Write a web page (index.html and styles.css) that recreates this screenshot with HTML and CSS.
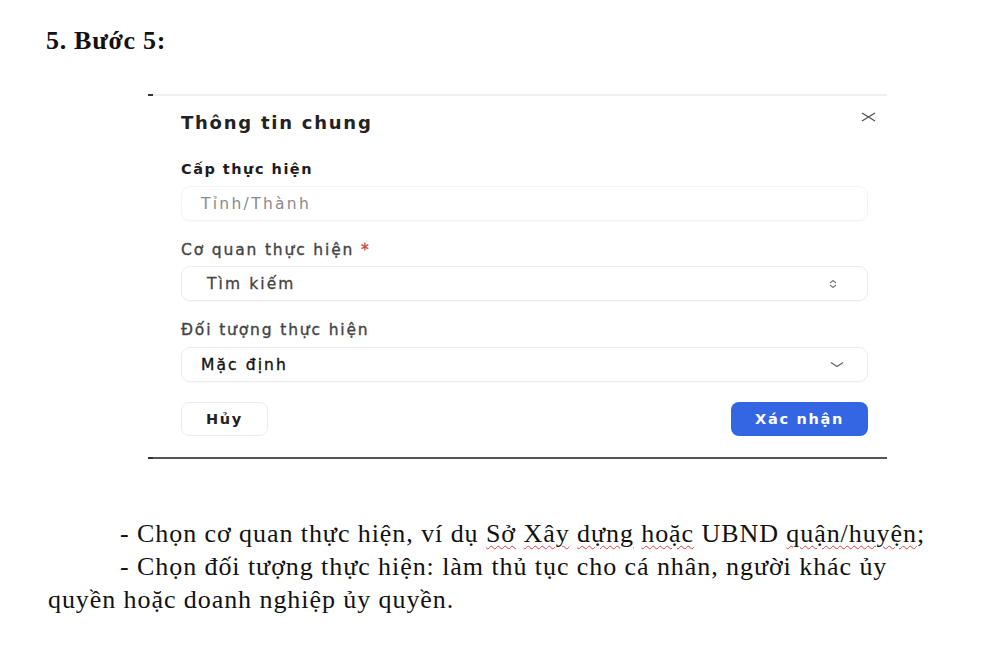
FILE: index.html
```html
<!DOCTYPE html>
<html lang="vi">
<head>
<meta charset="utf-8">
<link rel="stylesheet" href="styles.css">
</head>
<body>
<h1 class="step">5. Bước 5:</h1>
<div class="dialog">
  <div class="dlg-title">Thông tin chung</div>
  <svg class="close" width="15" height="10" viewBox="0 0 15 10"><path d="M1 1 L14 9 M14 1 L1 9" stroke="#555" stroke-width="1.4" fill="none"/></svg>
  <div class="label label-strong">Cấp thực hiện</div>
  <div class="field field-disabled"><span class="placeholder">Tỉnh/Thành</span></div>
  <div class="label">Cơ quan thực hiện <span class="req">*</span></div>
  <div class="field"><span class="search-text">Tìm kiếm</span>
    <svg class="updown" width="8" height="10" viewBox="0 0 8 10"><path d="M1 4 L4 1.5 L7 4 M1 6 L4 8.5 L7 6" stroke="#777" stroke-width="1.1" fill="none"/></svg>
  </div>
  <div class="label">Đối tượng thực hiện</div>
  <div class="field field-last"><span class="value">Mặc định</span>
    <svg class="down" width="14" height="7" viewBox="0 0 14 7"><path d="M1 1.5 L7 5.5 L13 1.5" stroke="#666" stroke-width="1.3" fill="none"/></svg>
  </div>
  <div class="actions">
    <button class="btn btn-cancel">Hủy</button>
    <button class="btn btn-ok">Xác nhận</button>
  </div>
</div>
<div class="doc">
  <p class="para">- Chọn cơ quan thực hiện, ví dụ <span class="sp">Sở</span> <span class="sp">Xây</span> <span class="sp">dựng</span> <span class="sp">hoặc</span> UBND <span class="sp">quận/huyện</span>;</p>
  <p class="para">- Chọn đối tượng thực hiện: làm thủ tục cho cá nhân, người khác ủy quyền hoặc doanh nghiệp ủy quyền.</p>
</div>
</body>
</html>
```
FILE: styles.css
```css
html, body { margin: 0; padding: 0; background: #fff; }
body { width: 1000px; height: 659px; overflow: hidden; }

.step {
  margin: 0;
  padding: 27px 0 0 46px;
  font-family: "Liberation Serif", serif;
  font-weight: bold;
  font-size: 26px;
  letter-spacing: 0.7px;
  line-height: 28px;
  color: #111;
}

.dialog {
  position: relative;
  margin: 39px 0 0 148px;
  width: 739px;
  box-sizing: border-box;
  border-top: 2px solid #efefef;
  border-bottom: 2px solid #555;
  padding: 15px 19px 21px 33px;
  font-family: "DejaVu Sans", "Liberation Sans", sans-serif;
}
.dialog::before,
.dialog::after {
  content: "";
  position: absolute;
  left: 0;
  width: 5px;
  height: 2px;
  background: #333;
}
.dialog::before { top: -2px; }
.dialog::after { bottom: -2px; }

.dlg-title {
  font-size: 18px;
  font-weight: 700;
  letter-spacing: 1.75px;
  line-height: 24px;
  color: #222;
}

.close { position: absolute; top: 16px; right: 11px; }

.label {
  margin-top: 20px;
  font-size: 15.5px;
  line-height: 18px;
  letter-spacing: 1.85px;
  color: #444;
  -webkit-text-stroke: 0.35px #444;
}
.label-strong {
  margin-top: 25px;
  font-size: 14.5px;
  font-weight: 700;
  letter-spacing: 1.5px;
  color: #1c1c1c;
  -webkit-text-stroke: 0;
}
.req { color: #d04545; -webkit-text-stroke: 0.35px #d04545; }

.field {
  margin-top: 7px;
  height: 35px;
  box-sizing: border-box;
  border: 1px solid #ececec;
  border-radius: 9px;
  display: flex;
  align-items: center;
  padding: 0 30px 0 19px;
  font-size: 15.5px;
  letter-spacing: 2.1px;
  box-shadow: 0 1px 1px rgba(0,0,0,0.03);
}
.field-disabled { margin-top: 8px; border-color: #f3f3f3; }
.field-last { margin-top: 8px; }
.placeholder { letter-spacing: 2.3px; color: #8a8a8a; }
.search-text { margin-left: 6px; color: #444; flex: 1; -webkit-text-stroke: 0.3px #444; }
.value { color: #111; flex: 1; -webkit-text-stroke: 0.35px #111; }
.down { margin-right: -7px; }

.actions {
  margin-top: 20px;
  display: flex;
  justify-content: space-between;
}
.btn {
  height: 34px;
  border-radius: 8px;
  font-family: "DejaVu Sans", "Liberation Sans", sans-serif;
  font-size: 14.5px;
  font-weight: 700;
  letter-spacing: 1.7px;
  cursor: pointer;
}
.btn-cancel {
  width: 87px;
  background: #fff;
  border: 1px solid #ececec;
  color: #222;
}
.btn-ok {
  width: 137px;
  background: #3466e3;
  border: none;
  color: #fff;
}

.doc {
  margin: 58px 0 0 48px;
  width: 880px;
  font-family: "Liberation Serif", serif;
  font-size: 26px;
  letter-spacing: 0.93px;
  line-height: 33px;
  color: #111;
}
.para { margin: 0; text-indent: 72px; }
.sp {
  text-decoration: underline wavy #e04040;
  text-decoration-thickness: 1px;
  text-underline-offset: 3px;
}
```
